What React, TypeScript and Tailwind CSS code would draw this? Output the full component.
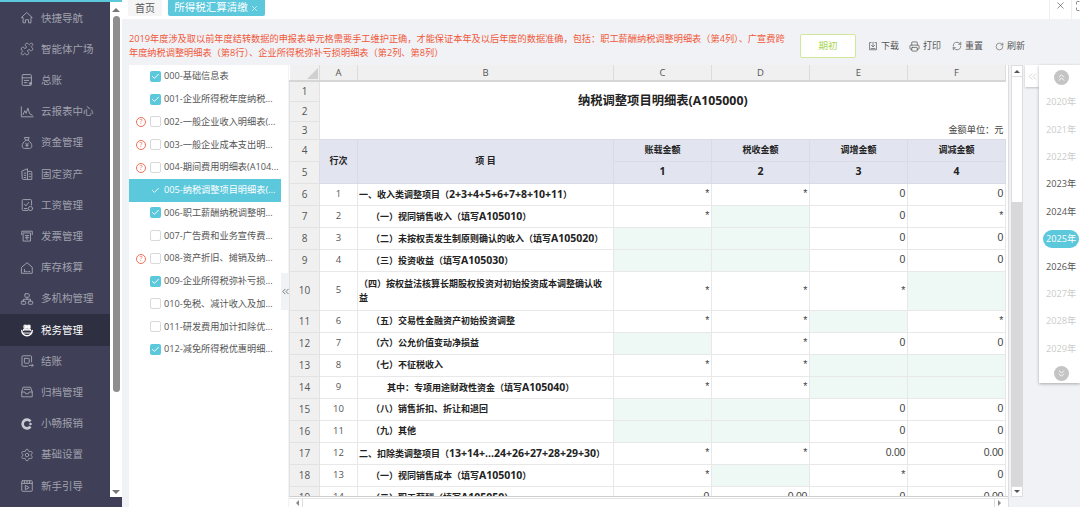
import type { ReactNode } from 'react'
import { Check, Maximize, Printer, Puzzle, RefreshCw, RotateCw, Settings, X, ChevronsLeft, ChevronsUp, ChevronsDown } from 'lucide-react'

function Ico({ children, className = '' }: { children: ReactNode; className?: string }) {
  return (
    <svg viewBox="0 0 16 16" fill="none" stroke="currentColor" strokeWidth="1.1" strokeLinejoin="round" strokeLinecap="round" className={`w-[14px] h-[14px] shrink-0 ${className}`}>
      {children}
    </svg>
  )
}

const navItems: { label: string; icon: ReactNode; active?: boolean }[] = [
  { label: '快捷导航', icon: <Ico><path d="M8 2 14 7.5H12.5V13.5H9.8V10H6.2V13.5H3.5V7.5H2Z" /></Ico> },
  { label: '智能体广场', icon: <Puzzle className="w-[14px] h-[14px] shrink-0" strokeWidth={1.5} /> },
  { label: '总账', icon: <Ico><rect x="2.5" y="1.8" width="10.5" height="12.4" rx="1.2" /><path d="M2.5 5.5H13M5 8.5H10M5 11H8" /><circle cx="12" cy="12" r="1.2" fill="currentColor" /></Ico> },
  { label: '云报表中心', icon: <Ico><path d="M1.5 2V13.5H15" /><path d="M3.5 11 5.5 6.5 7 9.5 9 3.5 11 10 14 11.5" /></Ico> },
  { label: '资金管理', icon: <Ico><path d="M5.5 1.8H10.5L9.2 4.8H6.8Z" /><path d="M6.8 4.8C3.8 6.8 2.5 9.2 2.5 11.2 2.5 13 3.5 14.2 5 14.2H11C12.5 14.2 13.5 13 13.5 11.2 13.5 9.2 12.2 6.8 9.2 4.8" /><path d="M6.5 8 8 10 9.5 8M8 10V12.5M6.5 10.6H9.5" /></Ico> },
  { label: '固定资产', icon: <Ico><path d="M2.5 4.5 8.5 2V14.2H3.7A1.2 1.2 0 0 1 2.5 13Z" /><path d="M8.5 5H12.5A1 1 0 0 1 13.5 6V14.2H8.5" /><path d="M4.8 7H6.5M4.8 9.5H6.5M4.8 12H6.5M10.5 8H12M10.5 11H12" /></Ico> },
  { label: '工资管理', icon: <Ico><path d="M9 14.2H3.7A1.2 1.2 0 0 1 2.5 13V3A1.2 1.2 0 0 1 3.7 1.8H12A1.2 1.2 0 0 1 13.2 3V8" /><path d="M5 7 6.8 9 10 5" /><circle cx="12" cy="12" r="2.4" /><path d="M5 12H8" /></Ico> },
  { label: '发票管理', icon: <Ico><path d="M2 6.5V2.5H14V6.5" /><path d="M4 4.5H12V13.8H4Z" /><path d="M6 7.5H10M6 10H10M8 7.5V12" /></Ico> },
  { label: '库存核算', icon: <Ico><path d="M2 7 8 2 14 7V14H2Z" /><path d="M5 9.5V12M7.5 12H8M10 12H11M5 12H6" /></Ico> },
  { label: '多机构管理', icon: <Ico><rect x="5.5" y="2" width="5" height="4" rx="0.8" /><rect x="1.5" y="10.5" width="5" height="3.5" rx="0.8" /><rect x="9.5" y="10.5" width="5" height="3.5" rx="0.8" /><path d="M8 6V8.3M4 10.5V8.3H12V10.5" /></Ico> },
  { label: '税务管理', active: true, icon: <Ico className="text-white"><path d="M2 8.5A6 6 0 0 0 14 8.5" strokeWidth="1.6" /><path d="M4 8.5V7H12V8.5M5 2.5H7.5V6H5ZM9 2.5H11.5V6H9Z" fill="currentColor" /><path d="M3 11.5H13" /></Ico> },
  { label: '结账', icon: <Ico><path d="M8.5 14H3.5A1.2 1.2 0 0 1 2.3 12.8V3.2A1.2 1.2 0 0 1 3.5 2H12A1.2 1.2 0 0 1 13.2 3.2V9" /><rect x="5" y="5" width="5.5" height="5.5" rx="0.6" /><path d="M10.5 13H15M13.5 11.5 15 13 13.5 14.5" /></Ico> },
  { label: '归档管理', icon: <Ico><path d="M4 2.5H12L14 8V13.5H2V8Z" /><path d="M2 8H5.5L6.5 10H9.5L10.5 8H14M5 5H11" /></Ico> },
  { label: '小畅报销', icon: <Ico className="text-[#c9cbd2]"><path d="M12 5A5 5 0 1 0 12 11" strokeWidth="3" strokeLinecap="butt" /><circle cx="12" cy="8" r="1.4" fill="currentColor" stroke="none" /></Ico> },
  { label: '基础设置', icon: <Settings className="w-[14px] h-[14px] shrink-0" strokeWidth={1.5} /> },
  { label: '新手引导', icon: <Ico><rect x="2" y="2" width="12" height="12" rx="0.8" /><path d="M2 5H14M5 2V5M8 2V5M11 2V5" /><path d="M6.5 7.5 10.5 9.8 6.5 12Z" /></Ico> },
]

const listItems: { text: string; on?: boolean; warn?: boolean; active?: boolean }[] = [
  { text: '000-基础信息表', on: true },
  { text: '001-企业所得税年度纳税...', on: true },
  { text: '002-一般企业收入明细表(...', warn: true },
  { text: '003-一般企业成本支出明...', warn: true },
  { text: '004-期间费用明细表(A104...', warn: true },
  { text: '005-纳税调整项目明细表(...', on: true, active: true },
  { text: '006-职工薪酬纳税调整明...', on: true },
  { text: '007-广告费和业务宣传费...' },
  { text: '008-资产折旧、摊销及纳...', warn: true },
  { text: '009-企业所得税弥补亏损...', on: true },
  { text: '010-免税、减计收入及加...' },
  { text: '011-研发费用加计扣除优...' },
  { text: '012-减免所得税优惠明细...', on: true },
]

type Row = { n: number; h: string; no: number; label: string; pad: string; cells: string[] }
// g = 绿色可填单元格
const rows: Row[] = [
  { n: 6, h: 'h-[22px]', no: 1, label: '一、收入类调整项目（2+3+4+5+6+7+8+10+11）', pad: 'pl-[1px]', cells: ['*', '*', '0', '0'] },
  { n: 7, h: 'h-[22px]', no: 2, label: '（一）视同销售收入（填写A105010）', pad: 'pl-[13px]', cells: ['*', 'g', '0', '*'] },
  { n: 8, h: 'h-[22px]', no: 3, label: '（二）未按权责发生制原则确认的收入（填写A105020）', pad: 'pl-[13px]', cells: ['g', 'g', '0', '0'] },
  { n: 9, h: 'h-[22px]', no: 4, label: '（三）投资收益（填写A105030）', pad: 'pl-[13px]', cells: ['g', 'g', '0', '0'] },
  { n: 10, h: 'h-[39px]', no: 5, label: '（四）按权益法核算长期股权投资对初始投资成本调整确认收\n益', pad: 'pl-[1px]', cells: ['*', '*', '*', 'g'] },
  { n: 11, h: 'h-[22px]', no: 6, label: '（五）交易性金融资产初始投资调整', pad: 'pl-[13px]', cells: ['*', '*', 'g', '*'] },
  { n: 12, h: 'h-[22px]', no: 7, label: '（六）公允价值变动净损益', pad: 'pl-[13px]', cells: ['g', '*', '0', '0'] },
  { n: 13, h: 'h-[22px]', no: 8, label: '（七）不征税收入', pad: 'pl-[13px]', cells: ['*', '*', 'g', 'g'] },
  { n: 14, h: 'h-[22px]', no: 9, label: '其中：专项用途财政性资金（填写A105040）', pad: 'pl-[29px]', cells: ['*', '*', 'g', 'g'] },
  { n: 15, h: 'h-[22px]', no: 10, label: '（八）销售折扣、折让和退回', pad: 'pl-[13px]', cells: ['g', 'g', '0', '0'] },
  { n: 16, h: 'h-[22px]', no: 11, label: '（九）其他', pad: 'pl-[13px]', cells: ['g', 'g', '0', '0'] },
  { n: 17, h: 'h-[22px]', no: 12, label: '二、扣除类调整项目（13+14+...24+26+27+28+29+30）', pad: 'pl-[1px]', cells: ['*', '*', '0.00', '0.00'] },
  { n: 18, h: 'h-[22px]', no: 13, label: '（一）视同销售成本（填写A105010）', pad: 'pl-[13px]', cells: ['*', 'g', '*', '0'] },
  { n: 19, h: 'h-[22px]', no: 14, label: '（二）职工薪酬（填写A105050）', pad: 'pl-[13px]', cells: ['0', '0.00', '0', '0.00'] },
]

const years = [
  { y: '2020年', off: true }, { y: '2021年', off: true }, { y: '2022年', off: true },
  { y: '2023年' }, { y: '2024年' }, { y: '2025年', active: true }, { y: '2026年' },
  { y: '2027年', off: true }, { y: '2028年', off: true }, { y: '2029年', off: true },
]

const rowHead = 'bg-[#f0f0f0] border border-[#e2e2e2] text-center text-[10px] text-[#555] font-normal'
const cell = 'border border-[#e8e8e8]'
const headCell = 'border border-[#d9dce6] bg-[#e2e5f0] text-center text-[9px] font-bold text-[#222]'

// 表内数字字母比汉字略大
function Label({ text }: { text: string }) {
  const parts = text.split(/([A-Za-z0-9+.]+)/)
  return (
    <>
      {parts.map((p, i) => (i % 2 === 1 ? <span key={i} className="text-[10.5px]">{p}</span> : p))}
    </>
  )
}

function Sidebar() {
  return (
    <aside className="w-[122px] shrink-0 flex flex-col bg-[#3f3f57]">
      <div className="h-[2px] bg-[#5bc8dc] shrink-0" />
      <div className="flex flex-1 min-h-0">
        <nav className="w-[110px] shrink-0 pt-[0.5px]">
          {navItems.map((it) => (
            <div key={it.label} className={`h-[31.2px] flex items-center pl-[20px] gap-[7px] text-[10.5px] ${it.active ? 'bg-[#2f2f42] text-white' : 'text-[#a0a2ae]'}`}>
              {it.icon}
              <span className="mt-[1px]">{it.label}</span>
            </div>
          ))}
        </nav>
        <div className="w-[12px] h-[495px] bg-white flex flex-col items-center pt-[6px]">
          <div className="w-0 h-0 border-x-[4px] border-x-transparent border-b-[4px] border-b-[#777]" />
          <div className="w-[7px] h-[376px] mt-[4px] rounded-[4px] bg-[#8e8e8e]" />
          <div className="w-0 h-0 mt-[98px] border-x-[4px] border-x-transparent border-t-[4px] border-t-[#777]" />
        </div>
      </div>
    </aside>
  )
}

function TabBar() {
  return (
    <div className="h-[19px] shrink-0 bg-white flex items-start justify-between pl-[6px]">
      <div className="flex gap-[6px]">
        <div className="h-[16px] w-[34px] bg-[#f5f5f5] rounded-b-[2px] text-[10px] text-[#555] flex items-center justify-center">首页</div>
        <div className="h-[16px] w-[97px] bg-[#5bc8dc] rounded-b-[2px] text-[10.5px] text-white flex items-center justify-center gap-[2px]">
          所得税汇算清缴
          <X className="w-[9px] h-[9px]" strokeWidth={1.6} />
        </div>
      </div>
      <div className="flex h-[19px] -mr-[6px]">
        <div className="w-[22px] border-l border-[#eeeeee] flex justify-center text-[#444]"><X className="w-[11px] h-[11px]" strokeWidth={1.3} /></div>
        <div className="w-[15px] border-l border-[#eeeeee] flex pl-[3px] text-[#444]"><Maximize className="w-[12px] h-[12px] shrink-0" strokeWidth={1.3} /></div>
      </div>
    </div>
  )
}

function Toolbar() {
  return (
    <div className="h-[46px] shrink-0 flex items-center pl-[7px] pt-[8px]">
      <p className="w-[662px] text-[9.2px] leading-[14px] text-[#f0583a]">
        2019年度涉及取以前年度结转数据的申报表单元格需要手工维护正确，才能保证本年及以后年度的数据准确，包括：职工薪酬纳税调整明细表（第4列）、广宣费跨年度纳税调整明细表（第8行）、企业所得税弥补亏损明细表（第2列、第8列）
      </p>
      <button className="ml-[9px] w-[56px] h-[24px] bg-white border border-[#cfe89a] rounded-[2px] text-[9.5px] text-[#a8d651]">期初</button>
      <div className="ml-[12px] flex items-center text-[9px] text-[#555]">
        <Ico className="!w-[10px] !h-[10px]"><path d="M5 2.5H2.5V14H13.5V2.5H11" /><path d="M8 2V9M5.5 7 8 9.5 10.5 7M5 12H11" /></Ico>
        <span className="ml-[3px]">下载</span>
        <Printer className="ml-[10px] w-[11px] h-[11px]" strokeWidth={1.6} />
        <span className="ml-[3px]">打印</span>
        <RefreshCw className="ml-[11px] w-[10px] h-[10px]" strokeWidth={1.6} />
        <span className="ml-[3px]">重置</span>
        <RotateCw className="ml-[12px] w-[9px] h-[9px]" strokeWidth={1.6} />
        <span className="ml-[3px]">刷新</span>
      </div>
    </div>
  )
}

function TreeList() {
  return (
    <div className="relative ml-[7px] w-[159px] shrink-0 bg-white">
      {listItems.map((it) => (
        <div key={it.text} className={`h-[22.75px] w-[152px] flex items-center text-[9.2px] whitespace-nowrap ${it.active ? 'bg-[#5bc8dc] text-white' : 'text-[#555]'}`}>
          <span className="w-[21px] flex justify-center pl-[3px] shrink-0">
            {it.warn && <span className="w-[10px] h-[10px] rounded-full border border-[#f0705a] text-[#f0705a] text-[7px] leading-[8px] text-center mt-[1px]">?</span>}
          </span>
          {it.active ? (
            <span className="w-[11px] flex justify-center"><Check className="w-[9px] h-[9px] text-white" strokeWidth={2.4} /></span>
          ) : it.on ? (
            <span className="w-[11px] h-[11px] rounded-[2px] bg-[#5bc8dc] flex items-center justify-center"><Check className="w-[9px] h-[9px] text-white" strokeWidth={2.6} /></span>
          ) : (
            <span className="w-[11px] h-[11px] rounded-[2px] border border-[#d9d9d9] bg-white" />
          )}
          <span className="ml-[3px]">{it.text}</span>
        </div>
      ))}
      <div className="absolute right-[-1px] top-[208px] w-[8px] h-[37px] bg-[#f1f2f5] flex items-center justify-center text-[#444]">
        <ChevronsLeft className="w-[11px] h-[11px] shrink-0" strokeWidth={1.5} />
      </div>
    </div>
  )
}

function Sheet() {
  return (
    <div className="w-[720px] shrink-0 flex flex-col bg-white ml-[1px] border-r border-[#dddddd]">
      <div className="h-[432px] overflow-hidden border-b border-[#cfcfcf]">
        <table className="table-fixed border-collapse w-[716px]">
          <colgroup>
            <col className="w-[30px]" />
            <col className="w-[38px]" />
            <col className="w-[256px]" />
            <col className="w-[98px]" />
            <col className="w-[98px]" />
            <col className="w-[98px]" />
            <col className="w-[98px]" />
          </colgroup>
          <tbody>
            <tr className="h-[16px]">
              <td className="bg-[#f0f0f0] border-b-2 border-[#d6d6d6] relative">
                <div className="absolute right-[1px] bottom-[1px] w-0 h-0 border-l-[11px] border-l-transparent border-b-[11px] border-b-[#d0d0d0]" />
              </td>
              {['A', 'B', 'C', 'D', 'E', 'F'].map((c) => (
                <td key={c} className="bg-[#f0f0f0] border-x border-x-[#dcdcdc] border-b-2 border-b-[#d6d6d6] text-center text-[9.5px] text-[#555] leading-none">{c}</td>
              ))}
            </tr>
            <tr className="h-[20px]">
              <td className={rowHead}>1</td>
              <td colSpan={6} rowSpan={2} className="text-center text-[12.3px] font-bold text-[#222] pb-[1px]">纳税调整项目明细表(A105000)</td>
            </tr>
            <tr className="h-[20px]"><td className={rowHead}>2</td></tr>
            <tr className="h-[18px]">
              <td className={rowHead}>3</td>
              <td colSpan={6} className="text-right text-[9.2px] text-[#444] pr-[2px] leading-none">金额单位：元</td>
            </tr>
            <tr className="h-[22px]">
              <td className={rowHead}>4</td>
              <td rowSpan={2} className={headCell}>行次</td>
              <td rowSpan={2} className={headCell}>项 目</td>
              <td className={headCell}>账载金额</td>
              <td className={headCell}>税收金额</td>
              <td className={headCell}>调增金额</td>
              <td className={headCell}>调减金额</td>
            </tr>
            <tr className="h-[22px]">
              <td className={rowHead}>5</td>
              <td className={headCell}><Label text="1" /></td>
              <td className={headCell}><Label text="2" /></td>
              <td className={headCell}><Label text="3" /></td>
              <td className={headCell}><Label text="4" /></td>
            </tr>
            {rows.map((r) => (
              <tr key={r.n} className={r.h}>
                <td className={rowHead}>{r.n}</td>
                <td className={`${cell} text-center text-[9.5px] text-[#555]`}>{r.no}</td>
                <td className={`${cell} ${r.pad} text-[9px] leading-[14px] font-bold text-[#222] whitespace-pre-line`}><Label text={r.label} /></td>
                {r.cells.map((c, i) => (
                  <td key={i} className={`${cell} text-right pr-[2px] font-['Liberation_Sans',sans-serif] text-[10.5px] tracking-[-0.3px] text-[#444] ${c === 'g' ? 'bg-[#eef8f5]' : ''}`}>{c === 'g' ? '' : c}</td>
                ))}
              </tr>
            ))}
          </tbody>
        </table>
      </div>
      <div className="flex-1 flex items-center gap-[3px] px-[7px] border-t border-[#e4e4e4] mt-[1px]">
        <div className="w-0 h-0 border-y-[3px] border-y-transparent border-r-[3px] border-r-[#888]" />
        <div className="flex-1 h-full border-x border-[#dddddd]" />
        <div className="w-0 h-0 border-y-[3px] border-y-transparent border-l-[3px] border-l-[#888]" />
      </div>
    </div>
  )
}

function VScroll() {
  return (
    <div className="ml-[2px] w-[12px] h-[432px] shrink-0 bg-[#d8d8d8] flex flex-col">
      <div className="h-[12px] bg-white border border-[#dddddd] flex items-center justify-center">
        <div className="w-0 h-0 border-x-[3px] border-x-transparent border-b-[3px] border-b-[#555]" />
      </div>
      <div className="h-[125px] bg-white border-x border-[#dddddd]" />
      <div className="flex-1" />
      <div className="h-[11px] bg-white border border-[#dddddd] flex items-center justify-center">
        <div className="w-0 h-0 border-x-[3px] border-x-transparent border-t-[3px] border-t-[#555]" />
      </div>
    </div>
  )
}

function YearPanel() {
  return (
    <div className="flex shrink-0 ml-[2px] items-start">
      <div className="w-[14px] h-[22px] bg-white shadow-[0_1px_2px_rgba(0,0,0,0.2)] flex items-center justify-center text-[#c4c4c4]">
        <ChevronsLeft className="w-[13px] h-[13px] shrink-0" strokeWidth={1.3} />
      </div>
      <div className="w-[41px] h-[318px] bg-white shadow-[0_1px_3px_rgba(0,0,0,0.3)] flex flex-col items-center pt-[5px]">
        <div className="w-[15px] h-[15px] rounded-full bg-[#c4c4c4] flex items-center justify-center text-white shrink-0 ml-[3px]"><ChevronsUp className="w-[11px] h-[11px]" strokeWidth={2} /></div>
        <div className="mt-[3.5px] w-full">
          {years.map((y) => (
            <div key={y.y} className="h-[27.4px] flex items-center pl-[4px]">
              <span className={`w-[36px] h-[18px] rounded-[9px] flex items-center justify-center text-[9.2px] ${y.active ? 'bg-[#5bc8dc] text-white' : y.off ? 'text-[#cccccc]' : 'text-[#555]'}`}>{y.y}</span>
            </div>
          ))}
        </div>
        <div className="mt-[4px] w-[15px] h-[15px] rounded-full bg-[#c4c4c4] flex items-center justify-center text-white shrink-0 ml-[3px]"><ChevronsDown className="w-[11px] h-[11px]" strokeWidth={2} /></div>
      </div>
    </div>
  )
}

export default function App() {
  return (
    <div className="w-[1080px] h-[507px] overflow-hidden flex font-['Open_Sans','Noto_Sans_CJK_SC',sans-serif]">
      <Sidebar />
      <main className="flex-1 min-w-0 flex flex-col bg-[#f1f2f5]">
        <TabBar />
        <Toolbar />
        <div className="flex flex-1 min-h-0">
          <TreeList />
          <Sheet />
          <VScroll />
          <YearPanel />
        </div>
      </main>
    </div>
  )
}
